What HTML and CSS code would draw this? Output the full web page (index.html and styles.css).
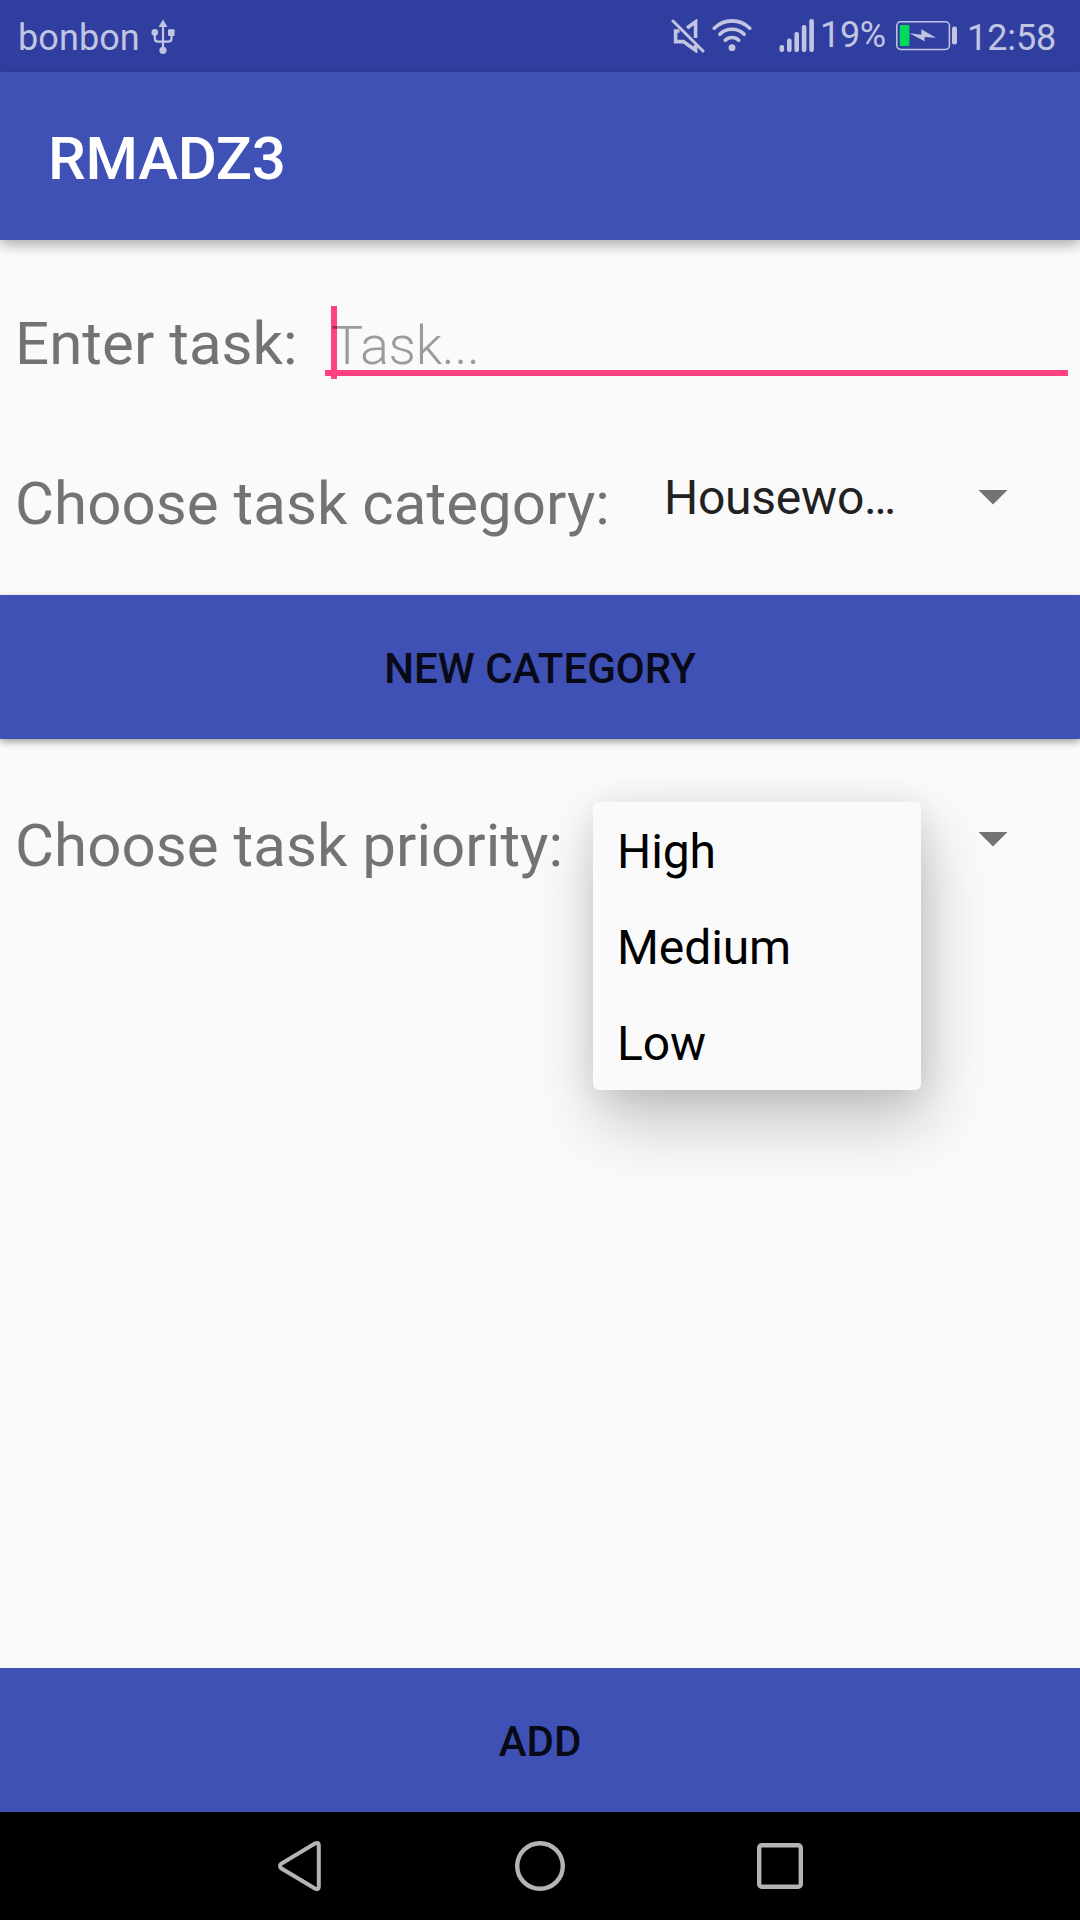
FILE: index.html
```html
<!DOCTYPE html>
<html lang="en">
<head>
<meta charset="utf-8">
<title>RMADZ3</title>
<link rel="stylesheet" href="styles.css">
</head>
<body>
<div class="screen">
  <header class="status">
    <span class="carrier">bonbon</span>
    <svg class="usb" width="24" height="36" viewBox="0 0 24 36">
      <g fill="none" stroke="currentColor" stroke-width="2.2">
        <path d="M12 6V31"/>
        <path d="M3.8 14V19.5Q3.8 22.7 7 22.7H17Q20.5 22.7 20.5 19.5V14"/>
      </g>
      <g fill="currentColor">
        <path d="M12 0.5L16.5 8H7.5Z"/>
        <circle cx="3.8" cy="13.4" r="3.3"/>
        <rect x="17" y="10.3" width="6.6" height="6.6" rx="1"/>
        <circle cx="12" cy="31.3" r="3.6"/>
      </g>
    </svg>
    <svg class="mute" width="34" height="34" viewBox="0 0 34 34">
      <g fill="none" stroke="currentColor" stroke-width="3.6">
        <path d="M2 2L32 32" stroke-linecap="round" stroke-width="3"/>
        <path d="M16 9L24.6 2.8V19"/>
        <path d="M8.5 12H4.6V22.6H12.4L24.6 31.3V26"/>
      </g>
    </svg>
    <svg class="wifi" width="40" height="33" viewBox="0 0 40 33">
      <g fill="none" stroke="currentColor" stroke-width="3.6" stroke-linecap="round">
        <path d="M2.3 9.2C12 -0.6 28 -0.6 37.7 9.2"/>
        <path d="M7.8 15.3C14.5 8.6 25.5 8.6 32.2 15.3"/>
        <path d="M13.3 21.2C17 17.6 23 17.6 26.7 21.2"/>
      </g>
      <circle cx="20" cy="28.7" r="3.4" fill="currentColor"/>
    </svg>
    <svg class="signal" width="36" height="34" viewBox="0 0 36 34">
      <g fill="currentColor">
        <rect x="0.5" y="26" width="4.6" height="7" rx="2"/>
        <rect x="8" y="19.5" width="4.6" height="13.5" rx="2"/>
        <rect x="15.4" y="13" width="4.6" height="20" rx="2"/>
        <rect x="22.8" y="6" width="4.6" height="27" rx="2"/>
        <rect x="30.3" y="0" width="4.6" height="33" rx="2"/>
      </g>
    </svg>
    <span class="percent">19%</span>
    <svg class="battery" width="62" height="30" viewBox="0 0 62 30">
      <rect x="0.8" y="0.8" width="52.6" height="27.6" rx="3.8" fill="none" stroke="currentColor" stroke-width="1.5"/>
      <rect x="56" y="5.5" width="5" height="18" rx="2.2" fill="currentColor"/>
      <rect x="3.8" y="4" width="9.6" height="21" rx="1" fill="#00dc5a"/>
      <path d="M13.5 12.2L25.3 13.8V8.2L40 16.8L28.6 16.1V20.3Z" fill="currentColor"/>
    </svg>
    <span class="clock">12:58</span>
  </header>

  <div class="appbar"><h1 class="title">RMADZ3</h1></div>

  <main class="form">
    <div class="row row-task">
      <label class="label">Enter task:</label>
      <div class="input"><span class="cursor"></span><span class="hint">Task...</span></div>
    </div>
    <div class="row row-category">
      <span class="label">Choose task category:</span>
      <div class="spinner"><span class="value">Housewo…</span><span class="caret"></span></div>
    </div>
    <button class="button button-raised">NEW CATEGORY</button>
    <div class="row row-priority">
      <span class="label">Choose task priority:</span>
      <div class="spinner"><span class="caret"></span></div>
      <ul class="menu">
        <li>High</li>
        <li>Medium</li>
        <li>Low</li>
      </ul>
    </div>
    <button class="button button-add">ADD</button>
  </main>

  <nav class="navbar">
    <svg width="50" height="54" viewBox="0 0 50 54"><path d="M6.2 24.7L40.3 4.4Q43.8 3 43.8 6.2V47.8Q43.8 51 40.3 49.6L6.2 29.3Q3.8 27 6.2 24.7Z" fill="none" stroke="#b4b4b4" stroke-width="4"/></svg>
    <svg width="54" height="54" viewBox="0 0 54 54"><circle cx="27" cy="27" r="22.8" fill="none" stroke="#b4b4b4" stroke-width="4.4"/></svg>
    <svg width="50" height="54" viewBox="0 0 50 54"><rect x="4.2" y="6.2" width="41.6" height="41.6" rx="2.5" fill="none" stroke="#b4b4b4" stroke-width="4.4"/></svg>
  </nav>
</div>
</body>
</html>
```
FILE: styles.css
```css
* {
  box-sizing: border-box;
}

body {
  margin: 0;
  font-family: Roboto, "Liberation Sans", sans-serif;
  background: #fafafa;
}

.screen {
  display: flex;
  flex-direction: column;
  width: 1080px;
  height: 1920px;
  overflow: hidden;
}

.status {
  display: flex;
  align-items: flex-start;
  height: 72px;
  padding-left: 18px;
  background: #303f9f;
  color: #c1c5e2;
  font-size: 36px;
  line-height: 44px;
  white-space: nowrap;
}

.status svg {
  flex: none;
}

.carrier {
  width: 133px;
  padding-top: 16px;
  letter-spacing: 0.1px;
}

.usb {
  margin-top: 19px;
}

.mute {
  margin: 19px 0 0 496px;
}

.wifi {
  margin: 19px 0 0 7px;
}

.signal {
  margin: 19px 0 0 27px;
}

.percent {
  width: 75px;
  padding: 13px 0 0 5px;
  letter-spacing: -0.3px;
}

.battery {
  margin: 21px 0 0 6px;
}

.clock {
  padding: 16px 0 0 9px;
  letter-spacing: -0.1px;
}

.appbar {
  position: relative;
  z-index: 1;
  display: flex;
  align-items: center;
  height: 168px;
  padding: 5px 48px 0;
  background: #3f51b5;
  box-shadow: 0 5px 12px rgba(0, 0, 0, 0.3);
}

.title {
  margin: 0;
  color: #fff;
  font-size: 60px;
  font-weight: 500;
  line-height: 72px;
  letter-spacing: -0.3px;
}

.form {
  display: flex;
  flex: 1;
  flex-direction: column;
}

.row {
  position: relative;
  display: flex;
  align-items: flex-start;
  padding-left: 15px;
}

.label {
  color: #737373;
  font-size: 60px;
  line-height: 72px;
  letter-spacing: 0.05px;
  white-space: nowrap;
}

.row-task {
  height: 207px;
  padding: 66px 12px 0 15px;
  justify-content: space-between;
}

.row-task .label {
  padding-top: 2px;
}

.input {
  position: relative;
  width: 743px;
  height: 70px;
  padding-left: 6px;
  border-bottom: 6px solid #ff4081;
}

.cursor {
  position: absolute;
  top: 0;
  left: 6px;
  width: 6px;
  height: 73px;
  background: #ff4081;
}

.hint {
  position: relative;
  display: block;
  padding-top: 4px;
  color: rgba(0, 0, 0, 0.38);
  font-size: 54px;
  font-weight: 300;
  line-height: 72px;
  letter-spacing: -0.3px;
}

.row-category {
  height: 148px;
  padding-top: 21px;
}

.spinner {
  display: flex;
  flex: 1;
  align-items: center;
  justify-content: flex-end;
  height: 72px;
  margin-top: -6px;
  padding-right: 72px;
}

.value {
  width: 314px;
  color: #212121;
  font-size: 48px;
  line-height: 72px;
  letter-spacing: -0.25px;
}

.caret {
  width: 30px;
  height: 15px;
  margin-bottom: 2px;
  background: #737373;
  clip-path: polygon(0 0, 100% 0, 50% 100%);
}

.button {
  width: 100%;
  height: 144px;
  padding: 3px 0 0;
  border: 0;
  background: #3f51b5;
  color: #080a17;
  font: 500 42px/50px Roboto, "Liberation Sans", sans-serif;
}

.button-raised {
  position: relative;
  box-shadow: 0 3px 7px rgba(0, 0, 0, 0.36);
}

.row-priority {
  flex: 1;
  padding-top: 71px;
}

.menu {
  position: absolute;
  top: 63px;
  left: 593px;
  width: 328px;
  margin: 0;
  padding: 0;
  list-style: none;
  border-radius: 6px;
  background: #fafafa;
  box-shadow: 6px 32px 66px rgba(0, 0, 0, 0.22), 1px 4px 32px rgba(0, 0, 0, 0.09);
}

.menu li {
  height: 96px;
  padding: 2px 24px 0;
  color: #000;
  font-size: 48px;
  line-height: 96px;
  letter-spacing: -0.1px;
}

.navbar {
  display: flex;
  align-items: center;
  justify-content: space-between;
  height: 108px;
  padding: 0 275px;
  background: #000;
}
```
